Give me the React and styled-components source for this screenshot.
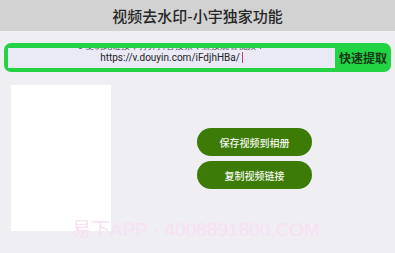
import React from "react";
import styled, { createGlobalStyle } from "styled-components";

const Global = createGlobalStyle`
  html, body { margin: 0; padding: 0; }
  body {
    width: 395px; height: 253px; overflow: hidden;
    background: #efeef3;
    font-family: "Noto Sans CJK SC", "Noto Sans", sans-serif;
  }
`;

const Page = styled.div`
  width: 395px;
  height: 253px;
  position: relative;
  background: #efeef3;
  overflow: hidden;
`;

const Header = styled.div`
  height: 31px;
  background: #d2d2d2;
  display: flex;
  align-items: center;
  justify-content: center;
  font-size: 15px;
  font-weight: 500;
  color: #262626;
`;

const Bar = styled.div`
  margin: 12px 4px 0 4px;
  height: 29px;
  background: #22d443;
  border-radius: 7px;
  display: flex;
  align-items: center;
  padding: 0 4px;
  gap: 3px;
`;

const Field = styled.div`
  flex: 0 0 327px;
  height: 20px;
  background: #eaeaf6;
  overflow: hidden;
  display: flex;
  flex-direction: column;
  align-items: center;
  font-family: "Roboto", "Noto Sans", sans-serif;
  font-size: 10px;
  line-height: 12px;
  color: #222;
`;

const Line = styled.div`
  white-space: nowrap;
  margin-top: ${p => p.$offset || 0}px;
  color: ${p => (p.$faint ? "#555" : "#222")};
  font-size: ${p => (p.$faint ? 9 : 10)}px;
`;

const Caret = styled.span`
  display: inline-block;
  width: 1px;
  height: 11px;
  background: #d33a6a;
  margin-left: 2px;
  vertical-align: -2px;
`;

const Extract = styled.div`
  font-size: 12px;
  font-weight: 700;
  color: #163816;
  white-space: nowrap;
  margin-left: 1px;
`;

const Content = styled.div`
  display: flex;
  padding: 13px 0 0 11px;
`;

const Preview = styled.div`
  width: 100px;
  height: 146px;
  background: #ffffff;
`;

const Actions = styled.div`
  display: flex;
  flex-direction: column;
  gap: 5px;
  margin: 43px 0 0 86px;
`;

const Btn = styled.div`
  width: 115px;
  height: 28px;
  border-radius: 14px;
  background: #3d7b07;
  color: #f4f7ee;
  font-size: 10px;
  font-weight: 500;
  display: flex;
  align-items: center;
  justify-content: center;
`;

const Watermark = styled.div`
  position: absolute;
  left: 72px;
  top: 214px;
  font-family: "Liberation Sans", "Noto Sans CJK SC", sans-serif;
  font-size: 19px;
  color: #f8e0f3;
  white-space: nowrap;
  pointer-events: none;
`;

export default function App() {
  return (
    <Page>
      <Global />
      <Header>视频去水印-小宇独家功能</Header>
      <Bar>
        <Field>
          <Line $offset={-8} $faint>5 复制此链接，打开抖音搜索，直接观看视频！</Line>
          <Line>
            https://v.douyin.com/iFdjhHBa/
            <Caret />
          </Line>
        </Field>
        <Extract>快速提取</Extract>
      </Bar>
      <Content>
        <Preview />
        <Actions>
          <Btn>保存视频到相册</Btn>
          <Btn>复制视频链接</Btn>
        </Actions>
      </Content>
      <Watermark>易下APP · 4008891800.COM</Watermark>
    </Page>
  );
}
